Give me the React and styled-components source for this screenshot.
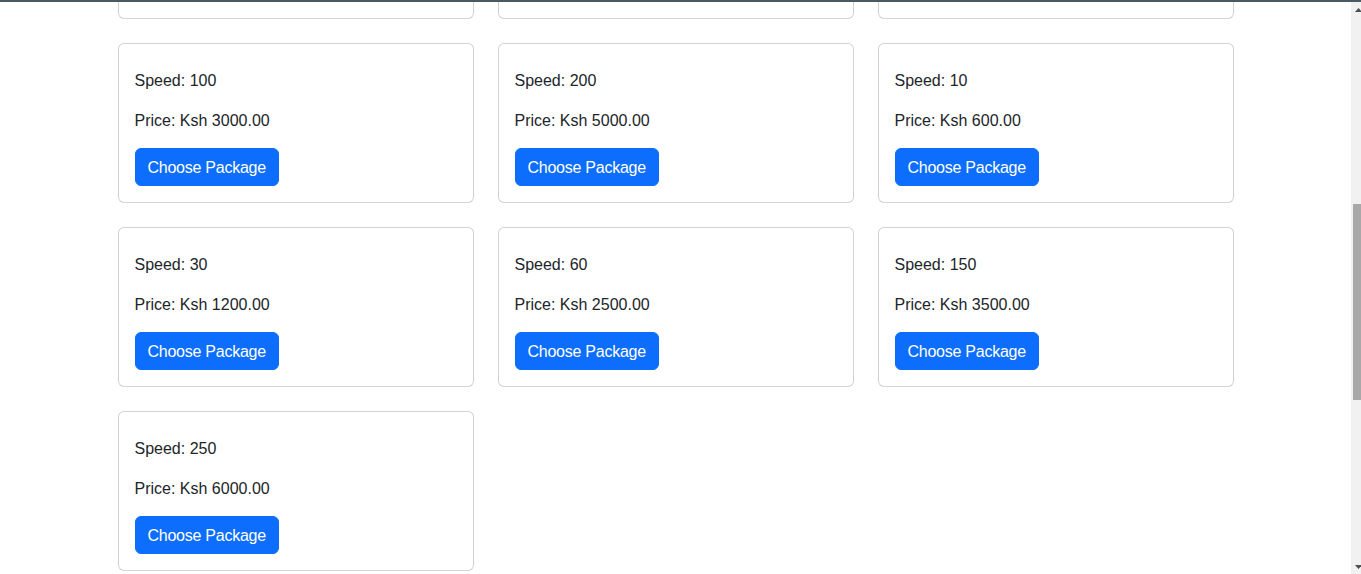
import React, { useLayoutEffect, useRef } from 'react';
import styled, { createGlobalStyle } from 'styled-components';

const GlobalStyle = createGlobalStyle`
  html, body {
    margin: 0;
    padding: 0;
    overflow: hidden;
    background: #fff;
  }
  body {
    font-family: "Liberation Sans", Arial, sans-serif;
    font-size: 16px;
    line-height: 1.5;
    color: #212529;
  }
  * { box-sizing: border-box; }
`;

const Shell = styled.div`
  width: 1366px;
  height: 574px;
  display: flex;
  flex-direction: column;
`;

const ChromeLine = styled.div`
  height: 2px;
  flex: none;
  background: #4b5a62;
`;

const Frame = styled.div`
  flex: 1;
  min-height: 0;
  display: flex;
`;

const Viewport = styled.div`
  flex: 1;
  min-width: 0;
  overflow-y: scroll;
  scrollbar-width: none;
  &::-webkit-scrollbar { display: none; }
`;

const Container = styled.div`
  max-width: 1140px;
  margin: 0 auto;
  padding: 0 12px 24px;
`;

const Grid = styled.div`
  display: grid;
  grid-template-columns: repeat(3, 1fr);
  column-gap: 24px;
  row-gap: 24px;
`;

const Card = styled.div`
  border: 1px solid rgba(0, 0, 0, 0.175);
  border-radius: 6px;
  background: #fff;
  padding: 24px 16px 16px;
`;

const Line = styled.p`
  margin: 0 0 15px;
  padding-top: 1px;
`;

const Button = styled.button`
  display: inline-block;
  font-family: inherit;
  font-size: 16px;
  line-height: 24px;
  letter-spacing: -0.25px;
  padding: 7px 12px 5px;
  color: #fff;
  background: #0d6efd;
  border: 1px solid #0d6efd;
  border-radius: 6px;
  cursor: pointer;
`;

const Scrollbar = styled.div`
  width: 15px;
  flex: none;
  background: #f1f1f1;
  display: flex;
  flex-direction: column;
  align-items: center;
`;

const Arrow = styled.div`
  height: 15px;
  flex: none;
  display: flex;
  align-items: center;
  justify-content: center;
  width: 100%;
`;

const Track = styled.div`
  flex: 1;
  width: 100%;
  padding: 0 2px;
`;

const Thumb = styled.div`
  background: #a8a8a8;
  width: 100%;
`;

const packages = [
  { speed: 20, price: '1500.00' },
  { speed: 40, price: '2000.00' },
  { speed: 80, price: '2800.00' },
  { speed: 100, price: '3000.00' },
  { speed: 200, price: '5000.00' },
  { speed: 10, price: '600.00' },
  { speed: 30, price: '1200.00' },
  { speed: 60, price: '2500.00' },
  { speed: 150, price: '3500.00' },
  { speed: 250, price: '6000.00' },
];

const Triangle = ({ down }) => (
  <svg width="7" height="4" viewBox="0 0 7 4">
    <path d={down ? 'M0 0 L7 0 L3.5 4 Z' : 'M0 4 L7 4 L3.5 0 Z'} fill="#505050" />
  </svg>
);

export default function App() {
  const viewRef = useRef(null);

  useLayoutEffect(() => {
    if (viewRef.current) viewRef.current.scrollTop = 143;
  }, []);

  return (
    <>
      <GlobalStyle />
      <Shell>
        <ChromeLine />
        <Frame>
          <Viewport ref={viewRef}>
            <Container>
              <Grid>
                {packages.map((p, i) => (
                  <Card key={i}>
                    <Line>Speed: {p.speed}</Line>
                    <Line>Price: Ksh {p.price}</Line>
                    <Button>Choose Package</Button>
                  </Card>
                ))}
              </Grid>
            </Container>
          </Viewport>
          <Scrollbar>
            <Arrow>
              <Triangle />
            </Arrow>
            <Track>
              <Thumb style={{ marginTop: 187, height: 196 }} />
            </Track>
            <Arrow>
              <Triangle down />
            </Arrow>
          </Scrollbar>
        </Frame>
      </Shell>
    </>
  );
}
